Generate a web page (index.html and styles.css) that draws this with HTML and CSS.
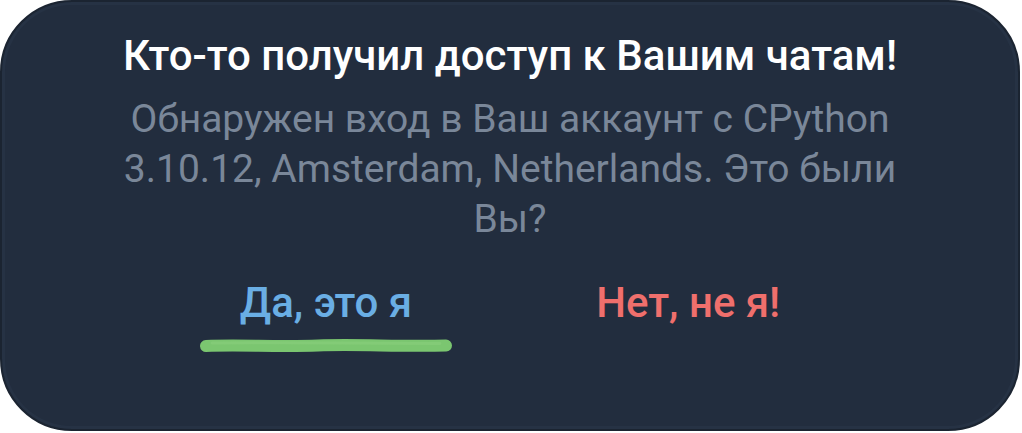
FILE: index.html
```html
<!DOCTYPE html>
<html lang="ru">
<head>
  <meta charset="utf-8">
  <link rel="stylesheet" href="styles.css">
</head>
<body>
  <div class="alert-card">
    <h2 class="alert-title">Кто-то получил доступ к Вашим чатам!</h2>
    <p class="alert-text">Обнаружен вход в Ваш аккаунт с CPython 3.10.12, Amsterdam, Netherlands. Это были Вы?</p>
    <div class="alert-actions">
      <div class="action">
        <button type="button" class="action-btn confirm">Да, это я</button>
        <!-- marker stroke under the confirm button -->
        <svg class="marker" width="256" height="18" viewBox="0 0 256 18">
          <path d="M8 9 C 40 7.5, 80 10, 120 8.5 S 200 9.8, 248 8.6" fill="none" stroke="#7bc670" stroke-width="12" stroke-linecap="round"/>
          <path d="M14 6 C 60 5.2, 150 5.8, 242 6.4" fill="none" stroke="#88ce7c" stroke-width="3" stroke-linecap="round" opacity="0.6"/>
        </svg>
      </div>
      <div class="action">
        <button type="button" class="action-btn decline">Нет, не я!</button>
      </div>
    </div>
  </div>
</body>
</html>
```

FILE: styles.css
```css
body {
  margin: 0;
  background: #ffffff;
  font-family: Roboto, "Noto Sans", Arial, sans-serif;
}
.alert-card {
  box-sizing: border-box;
  width: 1020px;
  height: 431px;
  background: #222d3e;
  border: 2px solid #1b2431;
  border-radius: 72px;
  box-shadow: inset 0 0 0 3px #263244;
  padding: 30px 40px 0;
  text-align: center;
}
.alert-title {
  margin: 0;
  color: #ffffff;
  font-size: 42px;
  font-weight: 500;
  line-height: 48px;
}
.alert-text {
  margin: 14px auto 0;
  max-width: 800px;
  color: #7a8799;
  font-size: 39px;
  line-height: 50px;
}
.alert-actions {
  display: flex;
  justify-content: center;
  gap: 184px;
  margin-top: 35px;
}
.action {
  position: relative;
}
.action-btn {
  background: none;
  border: none;
  padding: 0;
  font-family: inherit;
  font-size: 42px;
  font-weight: 500;
  line-height: 48px;
  cursor: pointer;
}
.confirm {
  color: #6aaee4;
}
.decline {
  color: #ef6f6c;
}
.marker {
  position: absolute;
  left: 50%;
  top: calc(100% + 10px);
  transform: translateX(-50%);
}
```
